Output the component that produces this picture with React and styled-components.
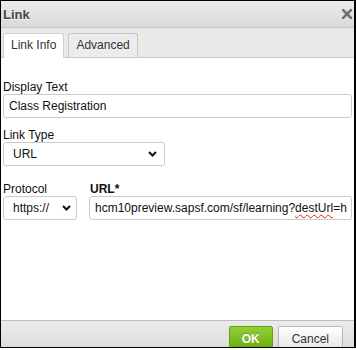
import styled, { createGlobalStyle } from 'styled-components';

const Global = createGlobalStyle`
  html, body {
    margin: 0;
    padding: 0;
    background: #fff;
  }
  body {
    font-family: "Liberation Sans", Arial, sans-serif;
  }
`;

const Chevron = () => (
  <svg width="9" height="6" viewBox="0 0 9 6">
    <path d="M1 1l3.5 3.5L8 1" fill="none" stroke="#111" strokeWidth="2" />
  </svg>
);

const CloseIcon = () => (
  <svg width="10" height="10" viewBox="0 0 10 10">
    <path d="M1 1L9 9M9 1L1 9" stroke="#6f6f6f" strokeWidth="2.6" strokeLinecap="square" />
  </svg>
);

const App = () => {
  return (
    <>
      <Global />
      <Dialog>
        <TitleBar>
          <Title>Link</Title>
          <CloseBtn>
            <CloseIcon />
          </CloseBtn>
        </TitleBar>

        <TabBar>
          <Tab active>Link Info</Tab>
          <Tab>Advanced</Tab>
        </TabBar>

        <Content>
          <Group>
            <Label>Display Text</Label>
            <Field>Class Registration</Field>
          </Group>

          <Group gap={10}>
            <Label>Link Type</Label>
            <Select width={162}>
              <span>URL</span>
              <Chevron />
            </Select>
          </Group>

          <Row>
            <Group gap={16} width={74}>
              <Label>Protocol</Label>
              <Select width={74} arrowGap={5}>
                <span>https://</span>
                <Chevron />
              </Select>
            </Group>
            <Group gap={16} grow>
              <Label bold indent={1}>URL*</Label>
              <Field>
                hcm10preview.sapsf.com/sf/learning?<Misspelled>destUrl</Misspelled>=h
              </Field>
            </Group>
          </Row>
        </Content>

        <Footer>
          <Button primary>OK</Button>
          <Button>Cancel</Button>
        </Footer>
      </Dialog>
    </>
  );
};

export default App;

const Dialog = styled.div`
  position: relative;
  width: 356px;
  height: 348px;
  box-sizing: border-box;
  padding: 1px 2px 1px 1px;
  display: flex;
  flex-direction: column;
  &::after {
    content: '';
    position: absolute;
    inset: 0;
    border-style: solid;
    border-color: #000;
    border-width: 1px 2px 1px 1px;
    pointer-events: none;
  }
`

const TitleBar = styled.div`
  height: 26px;
  flex: none;
  display: flex;
  align-items: center;
  justify-content: space-between;
  padding: 0 1px 0 2px;
  background: linear-gradient(#ececec, #d9d9d9);
  border-bottom: 1px solid #c4c4c4;
`

const Title = styled.div`
  font-size: 13px;
  font-weight: bold;
  color: #474747;
  text-shadow: 0 1px 0 rgba(255, 255, 255, 0.75);
`

const CloseBtn = styled.div`
  width: 12px;
  height: 12px;
  display: flex;
  align-items: center;
  justify-content: center;
`

const TabBar = styled.div`
  height: 30px;
  flex: none;
  box-sizing: border-box;
  display: flex;
  align-items: flex-end;
  gap: 4px;
  padding: 5px 0 0 2px;
  background: #e9e9e9;
  border-bottom: 1px solid #c8c8c8;
`

const Tab = styled.div`
  height: ${p => (p.active ? 25 : 24)}px;
  margin-bottom: ${p => (p.active ? -1 : 0)}px;
  box-sizing: border-box;
  padding: 0 7px;
  font-size: 12px;
  line-height: 23px;
  color: #333;
  background: ${p => (p.active ? '#fff' : '#ececec')};
  border: 1px solid ${p => (p.active ? '#d0d0d0' : '#c6c6c6')};
  border-bottom: none;
  border-radius: 3px 3px 0 0;
`

const Content = styled.div`
  flex: 1;
  background: #fff;
  padding: 22px 2px 0 2px;
  display: flex;
  flex-direction: column;
`

const Group = styled.div`
  display: flex;
  flex-direction: column;
  margin-top: ${p => p.gap || 0}px;
  width: ${p => (p.width ? `${p.width}px` : 'auto')};
  flex: ${p => (p.grow ? 1 : 'none')};
  min-width: 0;
`

const Row = styled.div`
  display: flex;
  gap: 12px;
`

const Label = styled.div`
  font-size: 12px;
  line-height: 14px;
  color: #111;
  font-weight: ${p => (p.bold ? 'bold' : 'normal')};
  padding-left: ${p => p.indent || 0}px;
`

const Field = styled.div`
  height: 24px;
  box-sizing: border-box;
  border: 1px solid #c9cccf;
  border-radius: 3px;
  padding: 0 5px;
  font-size: 12px;
  line-height: 22px;
  color: #111;
  white-space: nowrap;
  overflow: hidden;
`

const Misspelled = styled.span`
  text-decoration: underline wavy #e0201a;
  text-decoration-skip-ink: none;
  text-underline-offset: 2px;
  text-decoration-thickness: 1px;
`

const Select = styled.div`
  width: ${p => p.width}px;
  height: 24px;
  box-sizing: border-box;
  display: flex;
  align-items: center;
  justify-content: space-between;
  border: 1px solid #c9cccf;
  border-radius: 3px;
  padding: 0 ${p => p.arrowGap || 7}px 0 9px;
  font-size: 12px;
  color: #111;
  background: #fff;
`

const Footer = styled.div`
  flex: none;
  display: flex;
  justify-content: flex-end;
  align-items: flex-start;
  gap: 5px;
  padding: 5px 11px 0 0;
  height: 21px;
  background: linear-gradient(#ececec, #dcdcdc);
  border-top: 1px solid #bdbdbd;
`

const Button = styled.div`
  flex: none;
  height: 24px;
  box-sizing: border-box;
  padding: 2px ${p => (p.primary ? 12 : 13)}px 0;
  display: flex;
  align-items: center;
  justify-content: center;
  font-size: 12px;
  font-weight: ${p => (p.primary ? 'bold' : 'normal')};
  color: ${p => (p.primary ? '#fff' : '#333')};
  text-shadow: ${p => (p.primary ? '0 -1px 0 rgba(0,0,0,0.2)' : 'none')};
  background: ${p =>
    p.primary
      ? 'linear-gradient(#93d03a, #69ab0e)'
      : 'linear-gradient(#ffffff, #e6e6e6)'};
  border: 1px solid ${p => (p.primary ? '#64a10e' : '#b6b6b6')};
  border-radius: 2px;
`
